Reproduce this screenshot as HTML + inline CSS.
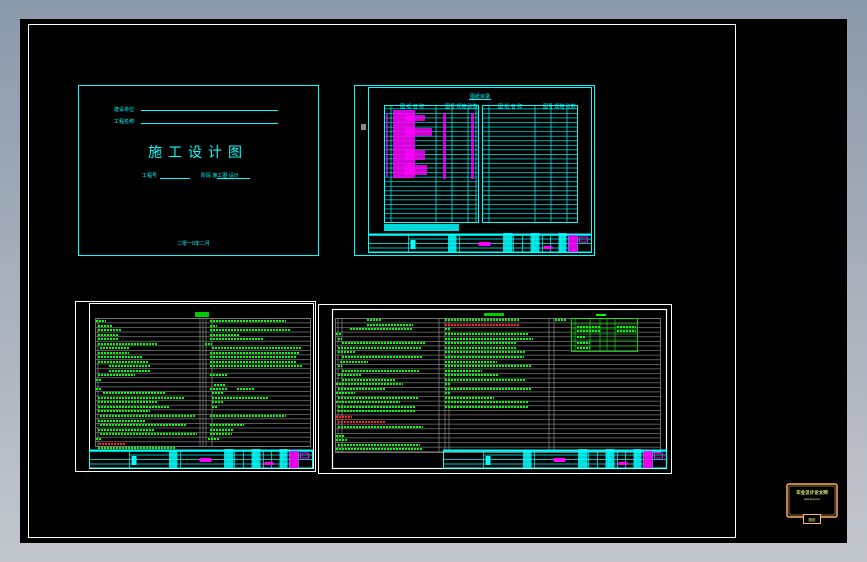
<!DOCTYPE html>
<html><head><meta charset="utf-8"><style>
html,body{margin:0;padding:0;width:867px;height:562px;overflow:hidden;background:#a9b0ba}
svg{display:block}
</style></head><body>
<svg width="867" height="562" viewBox="0 0 867 562" xmlns="http://www.w3.org/2000/svg" font-family="Liberation Sans, Noto Sans CJK SC, sans-serif">
<defs>
<linearGradient id="bg" x1="0" y1="0" x2="0" y2="1"><stop offset="0" stop-color="#8a99aa"/><stop offset="1" stop-color="#c3c6cd"/></linearGradient>
<pattern id="rowC" patternUnits="userSpaceOnUse" x="0" y="104" width="10" height="4.55"><line x1="0" y1="0.3" x2="10" y2="0.3" stroke="#00ffff" stroke-width="0.7"/></pattern>
<pattern id="rowG3" patternUnits="userSpaceOnUse" x="0" y="318" width="10" height="4.57"><line x1="0" y1="0.3" x2="10" y2="0.3" stroke="#8a8a8a" stroke-width="0.7"/></pattern>
<pattern id="rowG4" patternUnits="userSpaceOnUse" x="0" y="318" width="10" height="4.6"><line x1="0" y1="0.3" x2="10" y2="0.3" stroke="#8a8a8a" stroke-width="0.7"/></pattern>
<g id="tb">
<rect x="0" y="0" width="223" height="18" fill="none" stroke="#00ffff" stroke-width="1"/>
<line x1="0" y1="1" x2="223" y2="1" stroke="#00ffff" stroke-width="1.5"/>
<line x1="40" y1="5" x2="223" y2="5" stroke="#00ffff" stroke-width="0.7"/>
<line x1="0" y1="9.5" x2="223" y2="9.5" stroke="#00ffff" stroke-width="0.7"/>
<line x1="0" y1="14" x2="200" y2="14" stroke="#00ffff" stroke-width="0.7"/>
<g stroke="#00ffff" stroke-width="0.7">
<line x1="40" y1="0" x2="40" y2="18"/><line x1="80" y1="0" x2="80" y2="18"/><line x1="91" y1="0" x2="91" y2="18"/>
<line x1="135" y1="0" x2="135" y2="18"/><line x1="145" y1="0" x2="145" y2="18"/><line x1="154" y1="0" x2="154" y2="18"/>
<line x1="165" y1="0" x2="165" y2="18"/><line x1="174" y1="0" x2="174" y2="18"/><line x1="182" y1="0" x2="182" y2="18"/>
<line x1="192" y1="0" x2="192" y2="18"/><line x1="200" y1="0" x2="200" y2="18"/><line x1="209" y1="0" x2="209" y2="18"/>
</g>
<rect x="42" y="6" width="5" height="9" fill="#00ffff"/>
<rect x="80" y="0" width="8" height="18" fill="#00ffff" opacity="0.85"/>
<rect x="135" y="-1" width="9" height="19" fill="#00ffff" opacity="0.85"/>
<rect x="162" y="-1" width="9" height="19" fill="#00ffff" opacity="0.85"/>
<rect x="190" y="-1" width="8" height="19" fill="#00ffff" opacity="0.85"/>
<rect x="110" y="8" width="12" height="4" fill="#ff00ff"/>
<rect x="175" y="12" width="9" height="3" fill="#ff00ff"/>
<rect x="200" y="1" width="9" height="17" fill="#ff00ff" opacity="0.9"/>
<rect x="211" y="3" width="8" height="5" fill="none" stroke="#ff00ff" stroke-width="1"/>
</g>
</defs>
<rect width="867" height="562" fill="url(#bg)"/>
<rect x="20" y="19" width="827" height="524" fill="#000"/>
<rect x="28.5" y="24.5" width="707" height="513" fill="none" stroke="#fff" stroke-width="1"/>

<!-- Sheet 1 -->
<rect x="78.5" y="85.5" width="240" height="170" fill="none" stroke="#00ffff" stroke-width="1"/>
<text x="114" y="111" font-size="5" fill="#00ffff">建设单位:</text>
<text x="114" y="123" font-size="5" fill="#00ffff">工程名称:</text>
<line x1="141" y1="110.5" x2="278" y2="110.5" stroke="#00ffff"/>
<line x1="141" y1="123.5" x2="278" y2="123.5" stroke="#00ffff"/>
<text x="148" y="157" font-size="14" fill="#00ffff" letter-spacing="6">施工设计图</text>
<text x="142" y="177" font-size="5" fill="#00ffff">工程号</text>
<line x1="160" y1="178.5" x2="190" y2="178.5" stroke="#00ffff"/>
<text x="201" y="177" font-size="5" fill="#00ffff">阶段 施工图 设计</text>
<line x1="217" y1="178.5" x2="250" y2="178.5" stroke="#00ffff"/>
<text x="177" y="245" font-size="5" fill="#00ffff">二零一0年二月</text>

<!-- Sheet 2 -->
<rect x="354.5" y="85.5" width="240" height="170" fill="none" stroke="#00ffff" stroke-width="1"/>
<rect x="368.5" y="87.5" width="223" height="165" fill="none" stroke="#00ffff" stroke-width="1"/>
<rect x="361" y="124" width="5" height="6" fill="#888"/>
<text x="470" y="98" font-size="5" fill="#00ffff">图纸目录</text>
<line x1="469" y1="99.5" x2="491" y2="99.5" stroke="#00ffff"/>
<rect x="384.5" y="105.5" width="94" height="117" fill="url(#rowC)" stroke="#00ffff"/>
<rect x="482.5" y="105.5" width="95" height="117" fill="url(#rowC)" stroke="#00ffff"/>
<g stroke="#00ffff" stroke-width="0.7">
<line x1="391" y1="105" x2="391" y2="222"/><line x1="436" y1="105" x2="436" y2="222"/><line x1="452" y1="105" x2="452" y2="222"/><line x1="468" y1="105" x2="468" y2="222"/><line x1="476" y1="105" x2="476" y2="222"/>
<line x1="489" y1="105" x2="489" y2="222"/><line x1="535" y1="105" x2="535" y2="222"/><line x1="551" y1="105" x2="551" y2="222"/><line x1="567" y1="105" x2="567" y2="222"/>
</g>
<text x="400" y="108" font-size="5" fill="#00ffff">图 纸 名 称</text>
<text x="498" y="108" font-size="5" fill="#00ffff">图 纸 名 称</text>
<text x="445" y="108" font-size="5" fill="#00ffff">图号 规格 张数</text>
<text x="543" y="108" font-size="5" fill="#00ffff">图号 规格 张数</text>
<rect x="393" y="110" width="22" height="68" fill="#ff00ff" opacity="0.85"/>
<rect x="405" y="115" width="20" height="6" fill="#ff00ff" opacity="0.8"/>
<rect x="405" y="128" width="27" height="8" fill="#ff00ff" opacity="0.8"/>
<rect x="405" y="150" width="20" height="10" fill="#ff00ff" opacity="0.8"/>
<rect x="405" y="165" width="22" height="10" fill="#ff00ff" opacity="0.8"/>
<rect x="386" y="113" width="2" height="64" fill="#ff00ff" opacity="0.7"/>
<rect x="443" y="113" width="3" height="66" fill="#ff00ff" opacity="0.8"/>
<rect x="471" y="113" width="3" height="66" fill="#ff00ff" opacity="0.8"/>
<rect x="384" y="224" width="75" height="7" fill="#00ffff" opacity="0.85"/>
<use href="#tb" x="368.5" y="234"/>

<!-- Sheet 3 -->
<rect x="75.5" y="301.5" width="240" height="170" fill="none" stroke="#fff" stroke-width="1"/>
<rect x="89.5" y="303.5" width="224" height="165" fill="none" stroke="#fff" stroke-width="1"/>
<rect x="195" y="312" width="14" height="5" fill="#00ff00" opacity="0.8"/>
<rect x="95.5" y="318.5" width="215" height="128" fill="url(#rowG3)" stroke="#8a8a8a" stroke-width="0.8"/>
<g stroke="#8a8a8a" stroke-width="0.7"><line x1="98" y1="318" x2="98" y2="446"/><line x1="200" y1="318" x2="200" y2="446"/><line x1="203" y1="318" x2="203" y2="446"/><line x1="206" y1="318" x2="206" y2="446"/><line x1="212" y1="318" x2="212" y2="446"/></g>
<g stroke="#00ff00" stroke-width="2" stroke-dasharray="2 1">
<line x1="96" y1="321" x2="106" y2="321"/><line x1="98" y1="326" x2="113" y2="326"/><line x1="98" y1="330" x2="121" y2="330"/><line x1="98" y1="335" x2="118" y2="335"/><line x1="98" y1="339" x2="118" y2="339"/><line x1="98" y1="344" x2="158" y2="344"/><line x1="100" y1="348" x2="129" y2="348"/><line x1="98" y1="353" x2="129" y2="353"/><line x1="98" y1="357" x2="142" y2="357"/><line x1="98" y1="362" x2="148" y2="362"/><line x1="109" y1="366" x2="151" y2="366"/><line x1="109" y1="371" x2="151" y2="371"/><line x1="98" y1="375" x2="135" y2="375"/><line x1="96" y1="380" x2="101" y2="380"/><line x1="96" y1="389" x2="101" y2="389"/><line x1="103" y1="393" x2="165" y2="393"/><line x1="98" y1="398" x2="184" y2="398"/><line x1="98" y1="402" x2="157" y2="402"/><line x1="98" y1="407" x2="170" y2="407"/><line x1="98" y1="411" x2="150" y2="411"/><line x1="100" y1="416" x2="195" y2="416"/><line x1="98" y1="421" x2="145" y2="421"/><line x1="100" y1="425" x2="187" y2="425"/><line x1="98" y1="430" x2="155" y2="430"/><line x1="100" y1="434" x2="197" y2="434"/><line x1="96" y1="439" x2="102" y2="439"/><line x1="98" y1="448" x2="176" y2="448"/>
<line x1="210" y1="321" x2="286" y2="321"/><line x1="210" y1="326" x2="217" y2="326"/><line x1="210" y1="330" x2="291" y2="330"/><line x1="210" y1="335" x2="240" y2="335"/><line x1="210" y1="339" x2="263" y2="339"/><line x1="205" y1="344" x2="212" y2="344"/><line x1="212" y1="348" x2="302" y2="348"/><line x1="210" y1="353" x2="300" y2="353"/><line x1="210" y1="357" x2="296" y2="357"/><line x1="210" y1="362" x2="296" y2="362"/><line x1="210" y1="366" x2="302" y2="366"/><line x1="210" y1="375" x2="228" y2="375"/><line x1="214" y1="385" x2="225" y2="385"/><line x1="210" y1="389" x2="228" y2="389"/><line x1="237" y1="389" x2="255" y2="389"/><line x1="212" y1="393" x2="224" y2="393"/><line x1="212" y1="398" x2="268" y2="398"/><line x1="212" y1="402" x2="223" y2="402"/><line x1="212" y1="407" x2="218" y2="407"/><line x1="210" y1="416" x2="286" y2="416"/><line x1="210" y1="425" x2="244" y2="425"/><line x1="210" y1="430" x2="233" y2="430"/><line x1="210" y1="434" x2="232" y2="434"/><line x1="208" y1="439" x2="220" y2="439"/>
</g>
<line x1="99" y1="444" x2="126" y2="444" stroke="#ff2020" stroke-width="2" stroke-dasharray="2 1"/>
<use href="#tb" x="89.5" y="450"/>

<!-- Sheet 4 -->
<rect x="318.5" y="304.5" width="353" height="169" fill="none" stroke="#fff" stroke-width="1"/>
<rect x="332.5" y="309.5" width="334" height="159" fill="none" stroke="#fff" stroke-width="1.2"/>
<rect x="335.5" y="318.5" width="325" height="134" fill="url(#rowG4)" stroke="#8a8a8a" stroke-width="0.8"/>
<g stroke="#8a8a8a" stroke-width="0.7"><line x1="338" y1="318" x2="338" y2="452"/><line x1="342" y1="318" x2="342" y2="452"/><line x1="439" y1="318" x2="439" y2="452"/><line x1="445" y1="318" x2="445" y2="452"/><line x1="449" y1="318" x2="449" y2="452"/><line x1="549" y1="318" x2="549" y2="452"/><line x1="554" y1="318" x2="554" y2="452"/></g>
<rect x="484" y="313" width="20" height="3" fill="#00ff00" opacity="0.8"/>
<rect x="596" y="314" width="10" height="2" fill="#00ff00"/>
<rect x="571.5" y="318.5" width="66" height="33" fill="none" stroke="#00ff00" stroke-width="0.8"/>
<g stroke="#00ff00" stroke-width="0.6"><line x1="571" y1="324" x2="637" y2="324"/><line x1="571" y1="329" x2="637" y2="329"/><line x1="571" y1="334" x2="637" y2="334"/><line x1="571" y1="340" x2="637" y2="340"/><line x1="571" y1="346" x2="637" y2="346"/><line x1="575" y1="318" x2="575" y2="351"/><line x1="590" y1="318" x2="590" y2="351"/><line x1="600" y1="318" x2="600" y2="351"/><line x1="607" y1="318" x2="607" y2="351"/><line x1="615" y1="318" x2="615" y2="351"/></g>
<g stroke="#00ff00" stroke-width="2" stroke-dasharray="2 1">
<line x1="367" y1="320" x2="382" y2="320"/><line x1="367" y1="325" x2="413" y2="325"/><line x1="350" y1="329" x2="413" y2="329"/><line x1="336" y1="334" x2="342" y2="334"/><line x1="338" y1="339" x2="342" y2="339"/><line x1="342" y1="343" x2="426" y2="343"/><line x1="338" y1="348" x2="422" y2="348"/><line x1="338" y1="352" x2="355" y2="352"/><line x1="342" y1="357" x2="422" y2="357"/><line x1="340" y1="362" x2="368" y2="362"/><line x1="338" y1="366" x2="342" y2="366"/><line x1="342" y1="371" x2="420" y2="371"/><line x1="338" y1="375" x2="361" y2="375"/><line x1="342" y1="380" x2="395" y2="380"/><line x1="336" y1="384" x2="403" y2="384"/><line x1="338" y1="389" x2="385" y2="389"/><line x1="336" y1="393" x2="355" y2="393"/><line x1="338" y1="398" x2="418" y2="398"/><line x1="336" y1="402" x2="400" y2="402"/><line x1="338" y1="407" x2="415" y2="407"/><line x1="338" y1="411" x2="416" y2="411"/><line x1="338" y1="427" x2="423" y2="427"/><line x1="336" y1="436" x2="345" y2="436"/><line x1="336" y1="440" x2="348" y2="440"/><line x1="338" y1="445" x2="420" y2="445"/><line x1="336" y1="449" x2="423" y2="449"/>
<line x1="445" y1="320" x2="520" y2="320"/><line x1="445" y1="329" x2="450" y2="329"/><line x1="445" y1="334" x2="528" y2="334"/><line x1="445" y1="339" x2="533" y2="339"/><line x1="445" y1="343" x2="517" y2="343"/><line x1="445" y1="348" x2="517" y2="348"/><line x1="445" y1="352" x2="525" y2="352"/><line x1="445" y1="357" x2="524" y2="357"/><line x1="445" y1="362" x2="497" y2="362"/><line x1="445" y1="366" x2="531" y2="366"/><line x1="445" y1="371" x2="482" y2="371"/><line x1="445" y1="375" x2="498" y2="375"/><line x1="445" y1="380" x2="525" y2="380"/><line x1="445" y1="384" x2="450" y2="384"/><line x1="445" y1="389" x2="531" y2="389"/><line x1="445" y1="393" x2="450" y2="393"/><line x1="445" y1="398" x2="494" y2="398"/><line x1="445" y1="402" x2="528" y2="402"/><line x1="445" y1="407" x2="528" y2="407"/><line x1="555" y1="320" x2="566" y2="320"/>
<line x1="577" y1="327" x2="600" y2="327"/><line x1="577" y1="331" x2="600" y2="331"/><line x1="617" y1="327" x2="636" y2="327"/><line x1="617" y1="331" x2="636" y2="331"/><line x1="577" y1="337" x2="586" y2="337"/><line x1="577" y1="343" x2="590" y2="343"/><line x1="577" y1="348" x2="590" y2="348"/>
</g>
<line x1="445" y1="325" x2="520" y2="325" stroke="#ff2020" stroke-width="2" stroke-dasharray="2 1"/>
<line x1="336" y1="417" x2="352" y2="417" stroke="#ff2020" stroke-width="2.5" stroke-dasharray="2 1"/>
<line x1="338" y1="422" x2="386" y2="422" stroke="#ff2020" stroke-width="2" stroke-dasharray="2 1"/>
<use href="#tb" x="443.5" y="450"/>

<!-- logo -->
<rect x="787" y="484" width="50" height="33" rx="2" fill="#000" stroke="#ffb060" stroke-width="1.5"/>
<rect x="789" y="486" width="46" height="29" rx="1" fill="none" stroke="#ffe080" stroke-width="0.5"/>
<text x="812" y="494" font-size="4.5" fill="#e6ff80" text-anchor="middle" font-weight="bold">毕业设计论文网</text>
<text x="812" y="500" font-size="2.6" fill="#e6ff80" text-anchor="middle">www.bysj.com</text>
<rect x="803.5" y="514.5" width="17" height="9" fill="#000" stroke="#ffb060" stroke-width="1"/>
<text x="812" y="521" font-size="3.5" fill="#e6ff80" text-anchor="middle">图纸</text>
</svg>
</body></html>
